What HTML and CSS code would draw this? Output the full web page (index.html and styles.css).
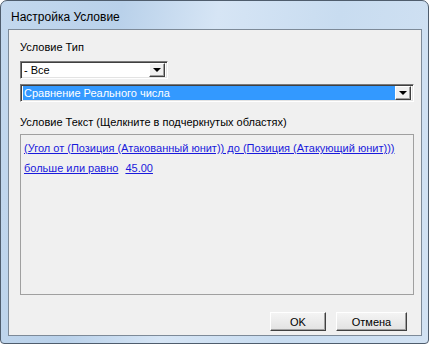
FILE: index.html
```html
<!DOCTYPE html>
<html lang="ru">
<head>
    <meta charset="UTF-8">
    <title>Настройка Условие</title>
    <link rel="stylesheet" href="styles.css">
</head>
<body>
    <div class="window">
        <div class="titlebar">Настройка Условие</div>
        <div class="client">
            <div class="label">Условие Тип</div>

            <div class="combo combo-short">
                <span class="combo-value">- Все</span>
                <span class="combo-btn"><span class="arrow"></span></span>
            </div>

            <div class="combo combo-wide">
                <span class="combo-value selected">Сравнение Реального числа</span>
                <span class="combo-btn"><span class="arrow"></span></span>
            </div>

            <div class="label label-text">Условие Текст (Щелкните в подчеркнутых областях)</div>

            <div class="text-box">
                <div class="line"><a href="#">(Угол от (Позиция (Атакованный юнит)) до (Позиция (Атакующий юнит)))</a></div>
                <div class="line">
                    <a href="#">больше или равно</a>
                    <a href="#" class="num">45.00</a>
                </div>
            </div>

            <div class="buttons">
                <button type="button" class="btn">OK</button>
                <button type="button" class="btn">Отмена</button>
            </div>
        </div>
    </div>
</body>
</html>
```

FILE: styles.css
```css
* {
    box-sizing: border-box;
    margin: 0;
    padding: 0;
}

body {
    background: #ffffff;
    font-family: "Liberation Sans", Arial, sans-serif;
    font-size: 11px;
    color: #000;
}

.window {
    width: 429px;
    height: 344px;
    border: 1px solid #4f5d6d;
    border-radius: 7px 7px 4px 4px;
    background: linear-gradient(100deg, #c3d8ee 0%, #b9d1ea 25%, #d6e5f5 45%, #c8dcf0 70%, #d2e2f3 100%);
    padding: 0 6px 7px 7px;
    display: flex;
    flex-direction: column;
}

.titlebar {
    height: 28px;
    padding: 9px 0 0 3px;
    font-size: 12px;
    color: #000;
}

.client {
    flex: 1;
    background: #f0f0f0;
    border: 1px solid #7d8a98;
    padding: 10px 10px 0 11px;
    display: flex;
    flex-direction: column;
}

.label {
    height: 14px;
    line-height: 14px;
}

.combo {
    margin-top: 7px;
    height: 18px;
    background: #fff;
    border: 1px solid;
    border-color: #7a7a7a #ffffff #ffffff #7a7a7a;
    box-shadow: inset 1px 1px 0 #404040, inset -1px -1px 0 #e3e3e3;
    display: flex;
    align-items: center;
    padding: 2px;
}

.combo-short {
    width: 148px;
}

.combo-wide {
    margin-top: 5px;
    width: 394px;
}

.combo-value {
    flex: 1;
    height: 14px;
    line-height: 14px;
    padding-left: 1px;
}

.combo-value.selected {
    background: #3399ff;
    color: #fff;
}

.combo-btn {
    width: 16px;
    height: 14px;
    background: #f0f0f0;
    border: 1px solid;
    border-color: #ffffff #404040 #404040 #ffffff;
    box-shadow: inset -1px -1px 0 #a0a0a0;
    display: flex;
    align-items: center;
    justify-content: center;
}

.arrow {
    width: 0;
    height: 0;
    border-left: 4px solid transparent;
    border-right: 4px solid transparent;
    border-top: 4px solid #000;
}

.label-text {
    margin-top: 13px;
}

.text-box {
    margin-top: 5px;
    width: 394px;
    height: 161px;
    border: 1px solid #a0a0a0;
    padding: 5px 3px;
}

.line {
    height: 20px;
    line-height: 16px;
}

.text-box a {
    color: #1a1adc;
    text-decoration: underline;
}

.num {
    margin-left: 4px;
}

.buttons {
    margin-top: 17px;
    display: flex;
    justify-content: flex-end;
    gap: 10px;
    padding-right: 4px;
}

.btn {
    width: 56px;
    height: 19px;
    font-family: "Liberation Sans", Arial, sans-serif;
    font-size: 11px;
    font-weight: normal;
    background: linear-gradient(#f4f4f4, #e2e2e2);
    border: 1px solid;
    border-color: #ffffff #404040 #404040 #ffffff;
    box-shadow: inset -1px -1px 0 #a0a0a0;
    color: #000;
}

.btn + .btn {
    width: 71px;
}
```
